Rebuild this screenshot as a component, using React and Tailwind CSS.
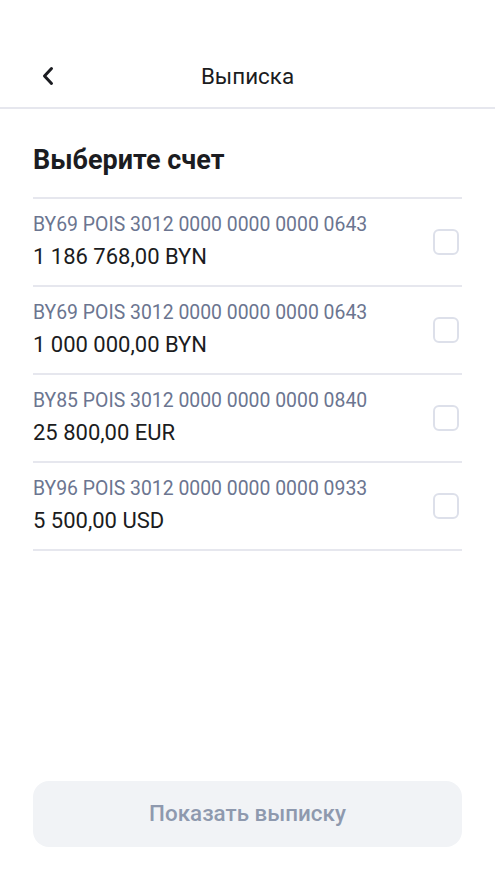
import { useState } from "react";

const accounts = [
  { iban: "BY69 POIS 3012 0000 0000 0000 0643", amount: "1 186 768,00 BYN" },
  { iban: "BY69 POIS 3012 0000 0000 0000 0643", amount: "1 000 000,00 BYN" },
  { iban: "BY85 POIS 3012 0000 0000 0000 0840", amount: "25 800,00 EUR" },
  { iban: "BY96 POIS 3012 0000 0000 0000 0933", amount: "5 500,00 USD" },
];

export default function App() {
  const [selected, setSelected] = useState(null);

  return (
    <div className="h-[880px] w-[495px] bg-white flex flex-col font-['Roboto',sans-serif] text-[#1b1c21]">
      {/* header */}
      <div className="h-[109px] pt-[44px] border-b-2 border-[#e6e7ee] flex items-center relative">
        <button className="absolute left-[38px] top-[62px] w-[20px] h-[28px] flex items-center justify-center">
          <svg width="14" height="20" viewBox="0 0 14 20" fill="none">
            <path d="M10.5 2.5L3.5 10l7 7.5" stroke="#1b1c21" strokeWidth="3" strokeLinecap="round" strokeLinejoin="round" />
          </svg>
        </button>
        <div className="w-full text-center text-[22.4px] leading-[28px]">Выписка</div>
      </div>

      <div className="px-[33px] flex-1 flex flex-col">
        <h1 className="mt-[34px] text-[27px] leading-[34px] font-bold">Выберите счет</h1>
        <div className="mt-[20px] border-t-2 border-[#e6e7ee]">
          {accounts.map((a, i) => (
            <div
              key={i}
              className="h-[88px] border-b-2 border-[#e6e7ee] flex items-center cursor-pointer"
              onClick={() => setSelected(i)}
            >
              <div className="flex-1 mb-[1px]">
                <div className="text-[19.4px] leading-[24px] text-[#6b7590]">{a.iban}</div>
                <div className="mt-[6px] text-[22px] leading-[28px] text-[#1b1c21]">{a.amount}</div>
              </div>
              <div
                className={
                  selected === i
                    ? "w-[26px] h-[26px] mr-[3px] rounded-[6px] border-2 border-[#1b1c21] bg-[#1b1c21]"
                    : "w-[26px] h-[26px] mr-[3px] rounded-[6px] border-2 border-[#dde0ea]"
                }
              />
            </div>
          ))}
        </div>

        <div className="flex-1" />
        <button className="mb-[33px] h-[66px] w-full rounded-[16px] bg-[#f1f3f6] text-[22.4px] font-medium text-[#8e99ae]">
          Показать выписку
        </button>
      </div>
    </div>
  );
}
